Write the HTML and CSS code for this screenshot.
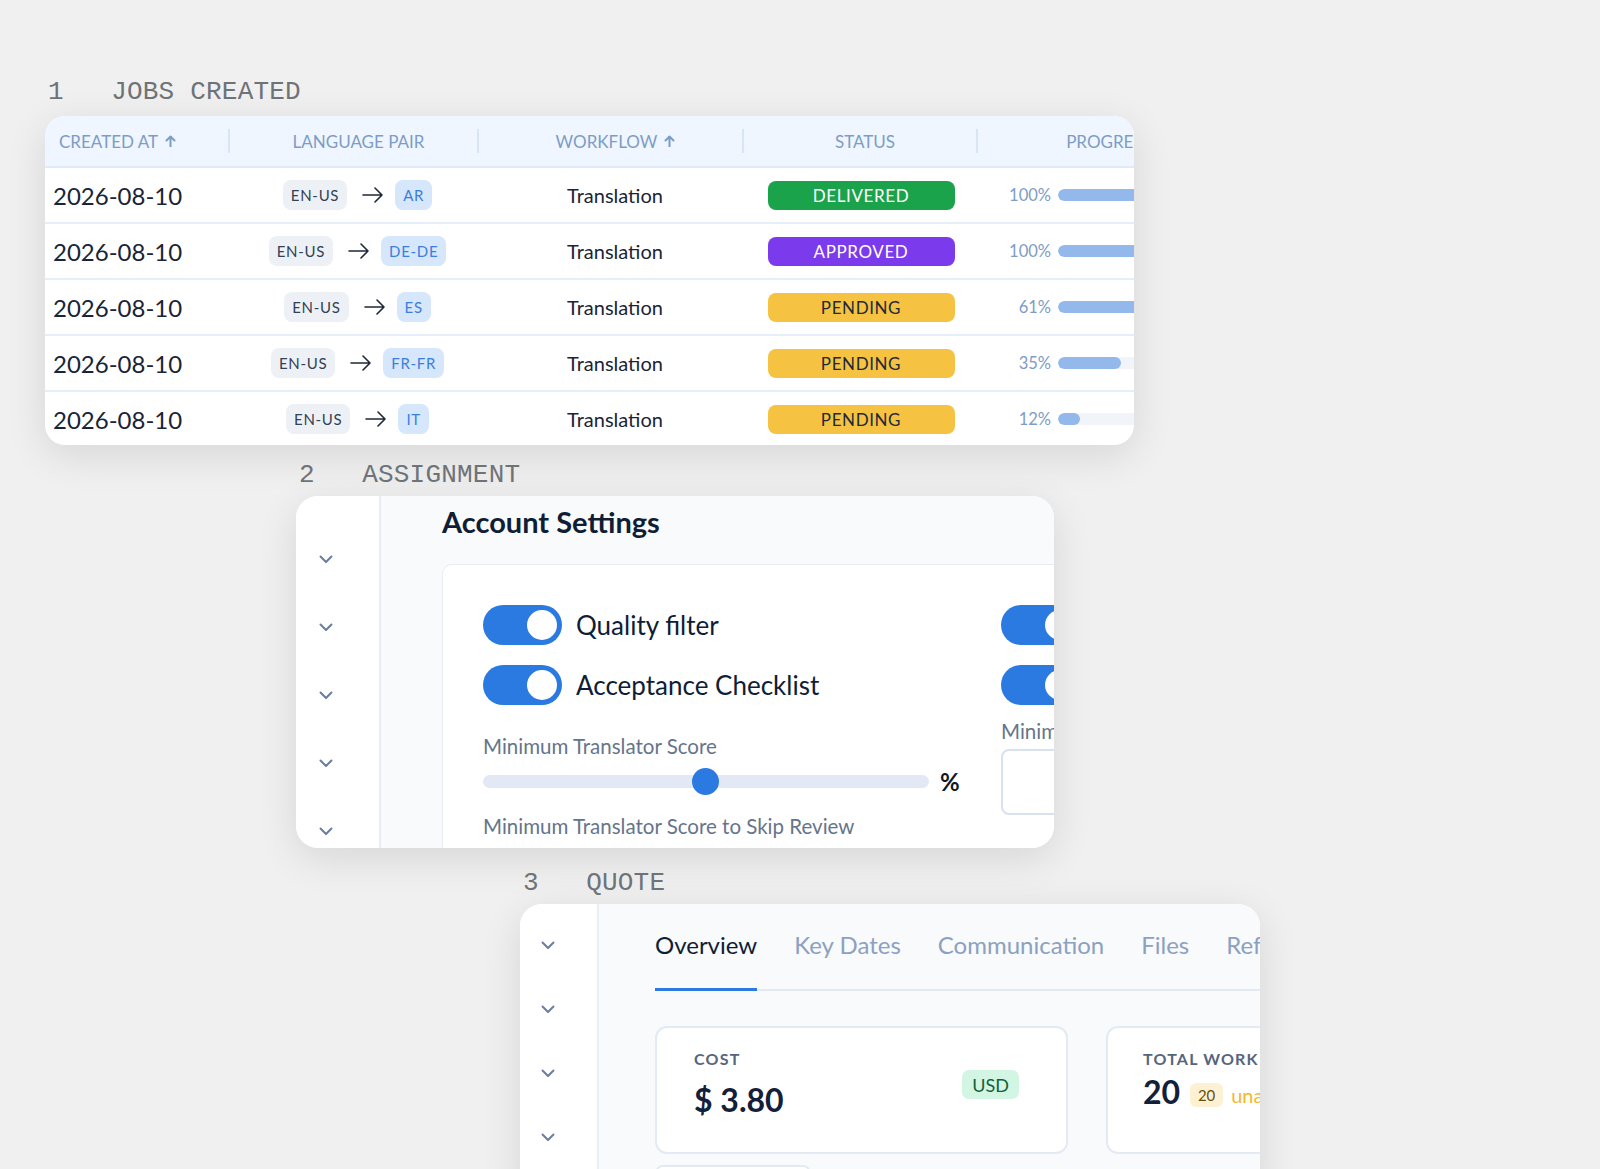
FILE: index.html
```html
<!DOCTYPE html>
<html lang="en">
<head>
    <meta charset="UTF-8">
    <meta name="viewport" content="width=device-width, initial-scale=1.0">
    <title>Workflow Steps</title>
    <link rel="stylesheet" href="styles.css">
</head>
<body>
  <main class="flow">

    <!-- step 1: jobs table -->
    <section class="step step-jobs">
        <h2 class="step-label">1   JOBS CREATED</h2>
        <div class="card jobs-card">
            <div class="jobs-row jobs-head">
                <div class="th th-left">CREATED AT
                    <svg class="sort" width="11" height="12" viewBox="0 0 11 12"><path d="M5.5 11.5V1.5M1.5 5.5l4-4 4 4"/></svg>
                </div>
                <div class="th">LANGUAGE PAIR</div>
                <div class="th">WORKFLOW
                    <svg class="sort" width="11" height="12" viewBox="0 0 11 12"><path d="M5.5 11.5V1.5M1.5 5.5l4-4 4 4"/></svg>
                </div>
                <div class="th">STATUS</div>
                <div class="th th-last">PROGRESS</div>
            </div>

            <div class="jobs-row">
                <div class="c-date">2026-08-10</div>
                <div class="c-pair">
                    <span class="pill pill-src">EN-US</span>
                    <svg class="arrow" width="22" height="16" viewBox="0 0 22 16"><path d="M1 8h19M13 1l7 7-7 7"/></svg>
                    <span class="pill pill-tgt">AR</span>
                </div>
                <div class="c-flow">Translation</div>
                <div class="c-status"><span class="badge badge-delivered">DELIVERED</span></div>
                <div class="c-prog">
                    <span class="pct">100%</span>
                    <span class="track"><span class="fill" style="width: 100%"></span></span>
                </div>
            </div>

            <div class="jobs-row">
                <div class="c-date">2026-08-10</div>
                <div class="c-pair">
                    <span class="pill pill-src">EN-US</span>
                    <svg class="arrow" width="22" height="16" viewBox="0 0 22 16"><path d="M1 8h19M13 1l7 7-7 7"/></svg>
                    <span class="pill pill-tgt">DE-DE</span>
                </div>
                <div class="c-flow">Translation</div>
                <div class="c-status"><span class="badge badge-approved">APPROVED</span></div>
                <div class="c-prog">
                    <span class="pct">100%</span>
                    <span class="track"><span class="fill" style="width: 100%"></span></span>
                </div>
            </div>

            <div class="jobs-row">
                <div class="c-date">2026-08-10</div>
                <div class="c-pair">
                    <span class="pill pill-src">EN-US</span>
                    <svg class="arrow" width="22" height="16" viewBox="0 0 22 16"><path d="M1 8h19M13 1l7 7-7 7"/></svg>
                    <span class="pill pill-tgt">ES</span>
                </div>
                <div class="c-flow">Translation</div>
                <div class="c-status"><span class="badge badge-pending">PENDING</span></div>
                <div class="c-prog">
                    <span class="pct">61%</span>
                    <span class="track"><span class="fill" style="width: 61%"></span></span>
                </div>
            </div>

            <div class="jobs-row">
                <div class="c-date">2026-08-10</div>
                <div class="c-pair">
                    <span class="pill pill-src">EN-US</span>
                    <svg class="arrow" width="22" height="16" viewBox="0 0 22 16"><path d="M1 8h19M13 1l7 7-7 7"/></svg>
                    <span class="pill pill-tgt">FR-FR</span>
                </div>
                <div class="c-flow">Translation</div>
                <div class="c-status"><span class="badge badge-pending">PENDING</span></div>
                <div class="c-prog">
                    <span class="pct">35%</span>
                    <span class="track"><span class="fill" style="width: 35%"></span></span>
                </div>
            </div>

            <div class="jobs-row">
                <div class="c-date">2026-08-10</div>
                <div class="c-pair">
                    <span class="pill pill-src">EN-US</span>
                    <svg class="arrow" width="22" height="16" viewBox="0 0 22 16"><path d="M1 8h19M13 1l7 7-7 7"/></svg>
                    <span class="pill pill-tgt">IT</span>
                </div>
                <div class="c-flow">Translation</div>
                <div class="c-status"><span class="badge badge-pending">PENDING</span></div>
                <div class="c-prog">
                    <span class="pct">12%</span>
                    <span class="track"><span class="fill" style="width: 12%"></span></span>
                </div>
            </div>
        </div>
    </section>

    <!-- step 2: assignment settings -->
    <section class="step step-assign">
        <h2 class="step-label">2   ASSIGNMENT</h2>
        <div class="card panel-card assign-card">
            <aside class="side side-assign">
                <div class="side-item"><svg class="chev" width="14" height="9" viewBox="0 0 14 9"><path d="M1.5 1.5l5.5 5.5 5.5-5.5"/></svg></div>
                <div class="side-item"><svg class="chev" width="14" height="9" viewBox="0 0 14 9"><path d="M1.5 1.5l5.5 5.5 5.5-5.5"/></svg></div>
                <div class="side-item"><svg class="chev" width="14" height="9" viewBox="0 0 14 9"><path d="M1.5 1.5l5.5 5.5 5.5-5.5"/></svg></div>
                <div class="side-item"><svg class="chev" width="14" height="9" viewBox="0 0 14 9"><path d="M1.5 1.5l5.5 5.5 5.5-5.5"/></svg></div>
                <div class="side-item"><svg class="chev" width="14" height="9" viewBox="0 0 14 9"><path d="M1.5 1.5l5.5 5.5 5.5-5.5"/></svg></div>
            </aside>
            <div class="assign-main">
                <h3 class="assign-title">Account Settings</h3>
                <div class="settings">
                    <div class="settings-col">
                        <div class="toggle-row"><span class="toggle"><span class="knob"></span></span>Quality filter</div>
                        <div class="toggle-row"><span class="toggle"><span class="knob"></span></span>Acceptance Checklist</div>
                        <div class="field-label">Minimum Translator Score</div>
                        <div class="slider-row">
                            <span class="slider"><span class="thumb" style="left: 50%"></span></span>
                            <span class="unit">%</span>
                        </div>
                        <div class="field-label field-label-next">Minimum Translator Score to Skip Review</div>
                    </div>
                    <div class="settings-col">
                        <div class="toggle-row"><span class="toggle"><span class="knob"></span></span></div>
                        <div class="toggle-row"><span class="toggle"><span class="knob"></span></span></div>
                        <div class="field-label field-label-side">Minim</div>
                        <div class="input-box"></div>
                    </div>
                </div>
            </div>
        </div>
    </section>

    <!-- step 3: quote -->
    <section class="step step-quote">
        <h2 class="step-label">3   QUOTE</h2>
        <div class="card panel-card quote-card">
            <aside class="side side-quote">
                <div class="side-item"><svg class="chev" width="14" height="9" viewBox="0 0 14 9"><path d="M1.5 1.5l5.5 5.5 5.5-5.5"/></svg></div>
                <div class="side-item"><svg class="chev" width="14" height="9" viewBox="0 0 14 9"><path d="M1.5 1.5l5.5 5.5 5.5-5.5"/></svg></div>
                <div class="side-item"><svg class="chev" width="14" height="9" viewBox="0 0 14 9"><path d="M1.5 1.5l5.5 5.5 5.5-5.5"/></svg></div>
                <div class="side-item"><svg class="chev" width="14" height="9" viewBox="0 0 14 9"><path d="M1.5 1.5l5.5 5.5 5.5-5.5"/></svg></div>
            </aside>
            <div class="quote-main">
                <nav class="tabs">
                    <span class="tab active">Overview</span>
                    <span class="tab">Key Dates</span>
                    <span class="tab">Communication</span>
                    <span class="tab">Files</span>
                    <span class="tab">Ref</span>
                </nav>
                <div class="stats">
                    <div class="stat stat-cost">
                        <div class="stat-body">
                            <div class="stat-label">COST</div>
                            <div class="stat-value">$ 3.80</div>
                        </div>
                        <span class="currency">USD</span>
                    </div>
                    <div class="stat stat-work">
                        <div class="stat-body">
                            <div class="stat-label">TOTAL WORK</div>
                            <div class="stat-value stat-value-row">20 <span class="count">20</span><span class="unassigned">una</span></div>
                        </div>
                    </div>
                </div>
                <div class="stat-tag"></div>
            </div>
        </div>
    </section>

  </main>
</body>
</html>
```

FILE: styles.css
```css
     html, body {
         overflow: hidden;
     }

     body {
         font-family: 'Lato', 'Noto Sans', sans-serif;
         background-color: #f0f0f0;
         margin: 0;
         padding-top: 77px;
         color: #14213a;
     }

     .step-label {
         font-family: 'Liberation Mono', monospace;
         font-weight: 400;
         font-size: 26px;
         line-height: 30px;
         letter-spacing: 0.2px;
         color: #6e7378;
         white-space: pre;
         margin: 0 0 9px;
         padding-left: 3px;
     }

     .step-jobs {
         margin-left: 45px;
     }

     .step-assign {
         margin-left: 296px;
         margin-top: 15px;
     }

     .step-quote {
         margin-left: 520px;
         margin-top: 20px;
     }

     .step-assign .step-label,
     .step-quote .step-label {
         margin-bottom: 6px;
     }

     .card {
         background-color: #fff;
         border-radius: 22px;
         box-shadow: 0px 10px 40px rgba(0, 0, 0, 0.11);
         overflow: hidden;
     }

     /* jobs table */
     .jobs-card {
         width: 1089px;
         height: 329px;
         border-radius: 20px;
     }

     .jobs-row {
         display: grid;
         grid-template-columns: 185px 249px 265px 234px 270px;
         align-items: center;
         height: 54px;
         border-bottom: 2px solid #e6eef9;
     }

     .jobs-head {
         height: 24px;
         padding: 13px 0;
         background-color: #eff6ff;
         border-bottom: 2px solid #e1ebf8;
     }

     .th {
         display: flex;
         align-items: center;
         justify-content: center;
         gap: 7px;
         height: 24px;
         padding-left: 10px;
         font-size: 17px;
         color: #7d9cc8;
         border-right: 2px solid #d8e5f6;
     }

     .th-left {
         justify-content: flex-start;
         padding-left: 14px;
     }

     .th-last {
         border-right: none;
         padding-left: 0;
         padding-right: 8px;
     }

     .sort path {
         fill: none;
         stroke: #7d9cc8;
         stroke-width: 2;
         stroke-linecap: round;
         stroke-linejoin: round;
     }

     .c-date {
         padding-left: 8px;
         font-size: 24px;
         color: #1a2436;
     }

     .c-pair {
         display: flex;
         align-items: center;
         justify-content: center;
         padding-left: 6px;
     }

     .arrow {
         margin: 0 11px 0 15px;
     }

     .arrow path {
         fill: none;
         stroke: #1f2937;
         stroke-width: 1.6;
         stroke-linecap: round;
         stroke-linejoin: round;
     }

     .pill {
         display: inline-flex;
         align-items: center;
         height: 30px;
         padding: 0 8px;
         border-radius: 8px;
         font-size: 15px;
         letter-spacing: 0.7px;
     }

     .pill-src {
         background-color: #edf1f6;
         color: #334155;
     }

     .pill-tgt {
         background-color: #d6e6fb;
         color: #3a7fdf;
     }

     .c-flow {
         text-align: center;
         padding-left: 7px;
         font-size: 20px;
         color: #1a2436;
     }

     .c-status {
         display: flex;
         justify-content: center;
     }

     .badge {
         display: flex;
         align-items: center;
         justify-content: center;
         width: 187px;
         height: 29px;
         border-radius: 8px;
         font-size: 17px;
         letter-spacing: 0.6px;
     }

     .badge-delivered {
         background-color: #1ba34b;
         color: #fff;
     }

     .badge-approved {
         background-color: #7c3aed;
         color: #fff;
     }

     .badge-pending {
         background-color: #f5c242;
         color: #1f2937;
     }

     .c-prog {
         display: flex;
         align-items: center;
     }

     .pct {
         width: 60px;
         margin-left: 13px;
         text-align: right;
         font-size: 16.5px;
         color: #7d9cc8;
     }

     .track {
         width: 180px;
         height: 12px;
         margin-left: 7px;
         border-radius: 6px;
         background-color: #f1f5f9;
         overflow: hidden;
     }

     .fill {
         display: block;
         height: 100%;
         border-radius: 6px;
         background-color: #93b8ec;
     }

     /* cards with a chevron sidebar */
     .panel-card {
         display: grid;
     }

     .side {
         background-color: #fff;
         border-right: 2px solid #e9eef5;
     }

     .side-item {
         display: flex;
         align-items: center;
     }

     .chev path {
         fill: none;
         stroke: #6a7d9b;
         stroke-width: 2;
         stroke-linecap: round;
         stroke-linejoin: round;
     }

     .assign-card {
         width: 758px;
         height: 352px;
         grid-template-columns: 85px 1fr;
     }

     .side-assign {
         padding-top: 29px;
     }

     .side-assign .side-item {
         height: 68px;
         padding-left: 23px;
     }

     .assign-main {
         background-color: #f8fafc;
         padding: 9px 0 0 61px;
         overflow: hidden;
     }

     .assign-title {
         margin: 0;
         font-size: 29px;
         line-height: 34px;
         font-weight: 700;
         color: #0f1d35;
     }

     .settings {
         display: grid;
         grid-template-columns: 478px 300px;
         column-gap: 40px;
         width: 860px;
         margin-top: 25px;
         padding: 40px 0 40px 40px;
         background-color: #fff;
         border: 1px solid #e8edf4;
         border-radius: 10px;
     }

     .settings-col {
         display: flex;
         flex-direction: column;
     }

     .toggle-row {
         display: flex;
         align-items: center;
         gap: 14px;
         height: 40px;
         font-size: 26px;
         color: #0f1d35;
         white-space: nowrap;
     }

     .toggle-row + .toggle-row {
         margin-top: 20px;
     }

     .toggle {
         display: flex;
         align-items: center;
         flex-shrink: 0;
         width: 79px;
         height: 40px;
         border-radius: 20px;
         background-color: #2a7ae2;
     }

     .knob {
         width: 30px;
         height: 30px;
         margin-left: auto;
         margin-right: 5px;
         border-radius: 50%;
         background-color: #fff;
     }

     .field-label {
         margin-top: 29px;
         font-size: 20.5px;
         line-height: 24px;
         color: #66748b;
         white-space: nowrap;
     }

     .field-label-next {
         margin-top: 19px;
     }

     .field-label-side {
         margin-top: 14px;
     }

     .slider-row {
         display: flex;
         align-items: center;
         height: 27px;
         margin-top: 10px;
     }

     .slider {
         position: relative;
         width: 446px;
         height: 13px;
         border-radius: 7px;
         background-color: #e2e9f4;
     }

     .thumb {
         position: absolute;
         top: -7px;
         width: 27px;
         height: 27px;
         margin-left: -14px;
         border-radius: 50%;
         background-color: #2a7ae2;
     }

     .unit {
         margin-left: 11px;
         font-size: 24px;
         font-weight: 700;
         color: #111827;
     }

     .input-box {
         width: 260px;
         height: 62px;
         margin-top: 6px;
         border: 2px solid #d8e1ee;
         border-radius: 8px;
         background-color: #fff;
     }

     /* quote */
     .quote-card {
         width: 740px;
         height: 300px;
         grid-template-columns: 79px 1fr;
     }

     .side-quote {
         padding-top: 9px;
     }

     .side-quote .side-item {
         height: 64px;
         padding-left: 21px;
     }

     .quote-main {
         background-color: #f8fafc;
         padding: 26px 0 0 56px;
         overflow: hidden;
     }

     .tabs {
         display: flex;
         gap: 37px;
         border-bottom: 2px solid #e3e9f2;
     }

     .tab {
         flex-shrink: 0;
         font-size: 24px;
         line-height: 30px;
         padding-bottom: 28px;
         margin-bottom: -2px;
         border-bottom: 3px solid transparent;
         color: #8ca1c0;
         white-space: nowrap;
     }

     .tab.active {
         color: #0f1d35;
         border-bottom-color: #2a7ae2;
     }

     .stats {
         display: flex;
         gap: 38px;
         margin-top: 35px;
     }

     .stat {
         display: flex;
         align-items: flex-start;
         flex-shrink: 0;
         padding: 21px 47px 0 37px;
         border: 2px solid #e3eaf4;
         border-radius: 12px;
         background-color: #fff;
     }

     .stat-cost {
         width: 325px;
         height: 103px;
     }

     .stat-work {
         width: 320px;
         height: 103px;
         padding-left: 35px;
     }

     .stat-body {
         flex: 1;
     }

     .stat-label {
         font-size: 16px;
         line-height: 20px;
         font-weight: 700;
         letter-spacing: 1.2px;
         color: #56657d;
         white-space: nowrap;
     }

     .stat-value {
         margin-top: 12px;
         font-size: 32px;
         line-height: 38px;
         font-weight: 700;
         color: #13203a;
     }

     .stat-value-row {
         display: flex;
         align-items: center;
         margin-top: 1px;
         white-space: nowrap;
     }

     .count {
         display: inline-flex;
         align-items: center;
         justify-content: center;
         width: 33px;
         height: 24px;
         margin-left: 10px;
         margin-top: 6px;
         border-radius: 6px;
         background-color: #fdf1d4;
         color: #6b4e10;
         font-size: 15px;
         font-weight: 400;
     }

     .unassigned {
         margin-left: 8px;
         margin-top: 6px;
         font-size: 20px;
         font-weight: 400;
         color: #f5b82b;
     }

     .currency {
         display: inline-flex;
         align-items: center;
         height: 29px;
         margin-top: 21px;
         padding: 0 10px;
         border-radius: 7px;
         background-color: #d3f5e3;
         color: #15603a;
         font-size: 18px;
     }

     .stat-tag {
         width: 152px;
         height: 40px;
         margin-top: 11px;
         border: 2px solid #e3eaf4;
         border-radius: 8px;
         background-color: #fff;
     }
```
